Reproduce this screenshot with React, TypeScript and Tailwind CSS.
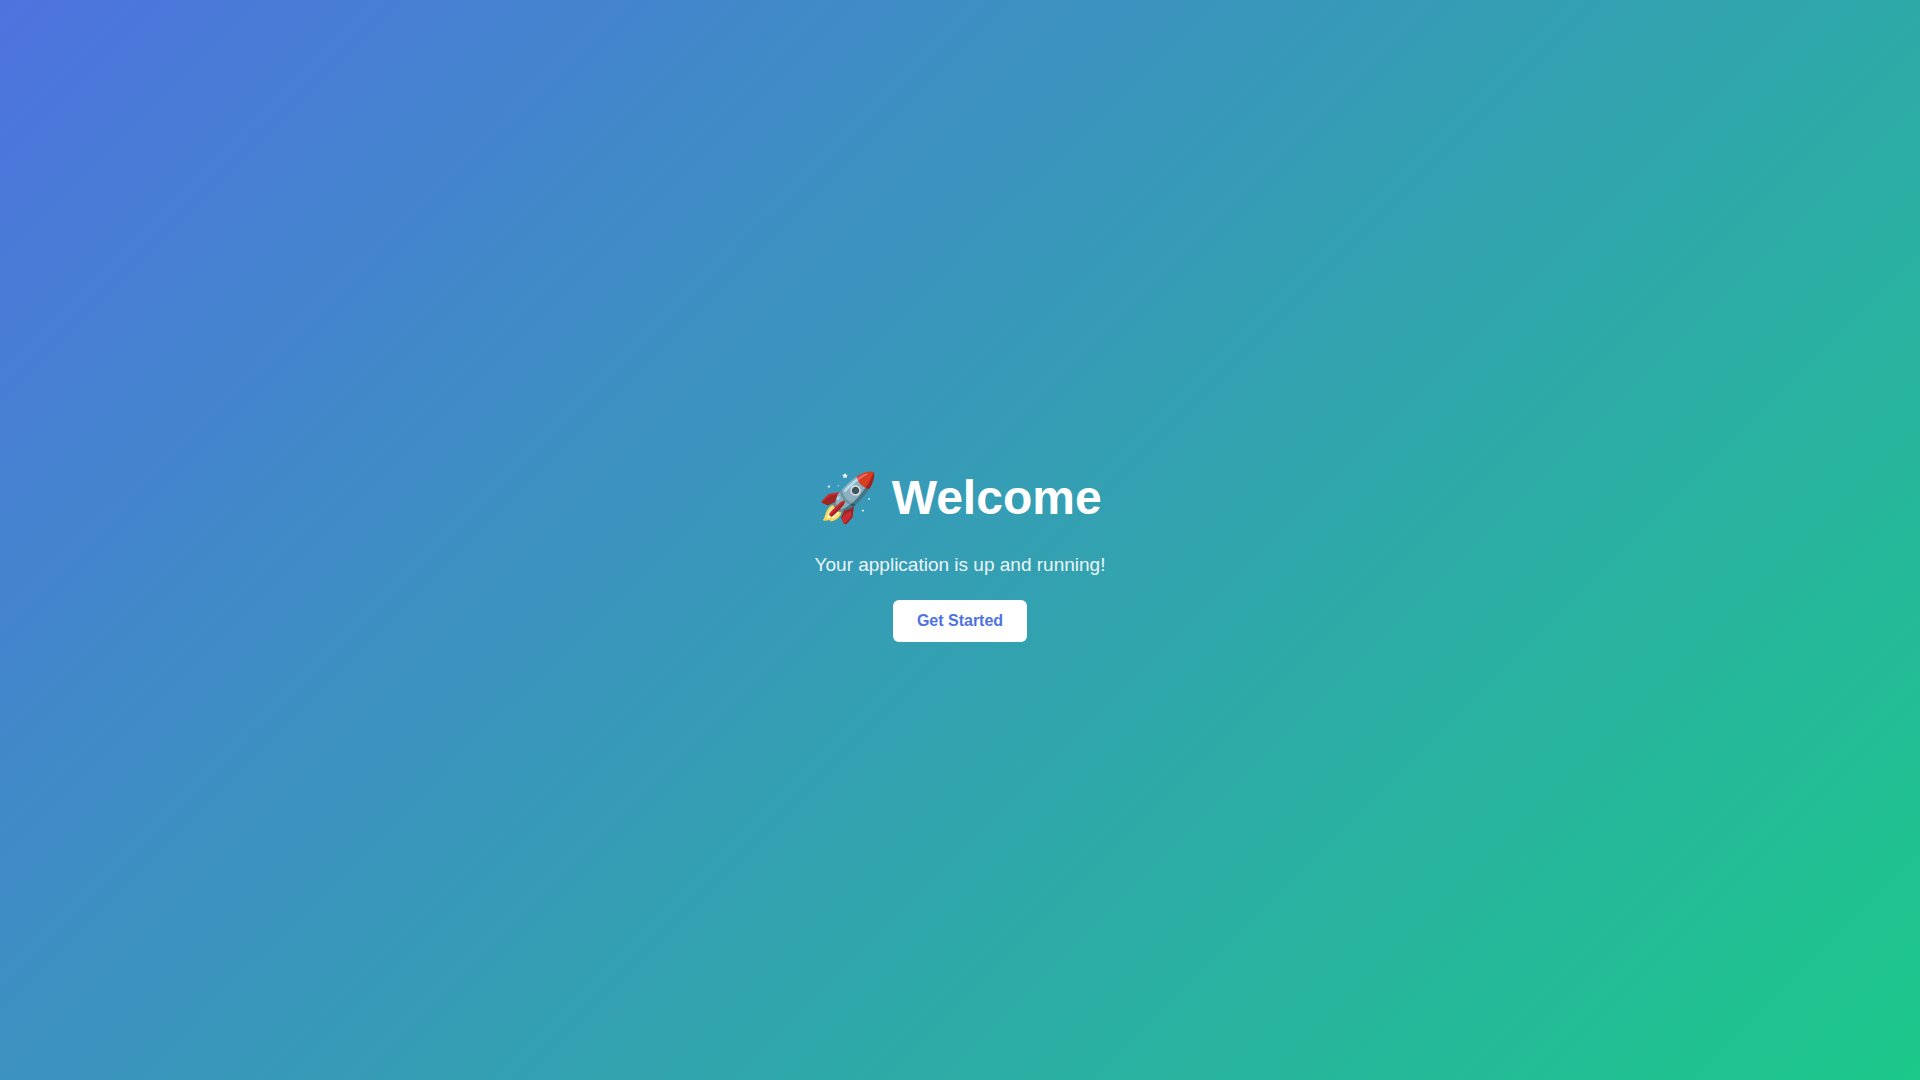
export default function App() {
  return (
    <main className="flex min-h-screen flex-col items-center justify-center bg-[linear-gradient(135deg,#4e73df,#1cc88a)] text-center font-['Liberation_Sans',Arial,sans-serif] text-white">
      <h1 className="mt-8 mb-7 text-5xl leading-[56px] font-bold">🚀 Welcome</h1>
      <p className="mb-6 text-[19px] leading-[22px] opacity-90">Your application is up and running!</p>
      <button type="button" className="rounded-md bg-white px-6 py-3 text-base leading-[18px] font-bold text-[#4e73df]">
        Get Started
      </button>
    </main>
  );
}
